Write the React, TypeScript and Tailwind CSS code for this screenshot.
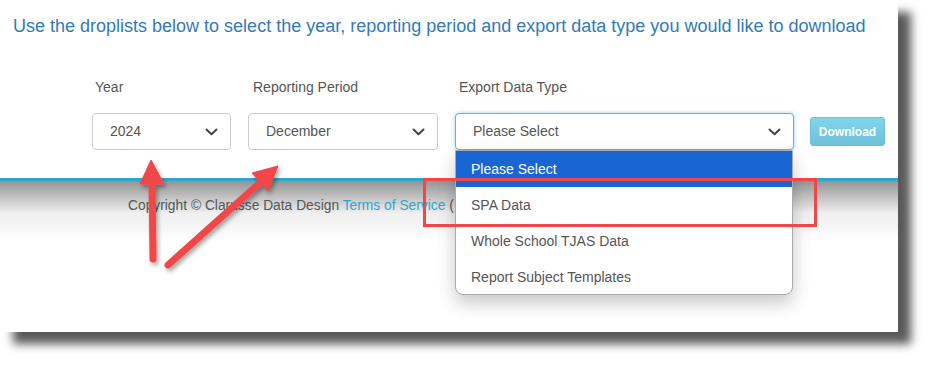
import React from "react";

const Chevron = () => (
  <svg width="13" height="8" viewBox="0 0 13 8" className="shrink-0">
    <path d="M1.5 1.5 L6.5 6.2 L11.5 1.5" fill="none" stroke="#444" strokeWidth="2" strokeLinecap="round" strokeLinejoin="round" />
  </svg>
);

const FakeSelect = ({ value, width, focused }: { value: string; width: string; focused?: boolean }) => (
  <div
    className={`${width} h-[37px] flex items-center justify-between pl-[17px] pr-[12px] rounded-[4px] bg-white text-[14px] text-[#555] ${
      focused ? "border border-[#66afe9] shadow-[0_0_4px_rgba(102,175,233,0.6)]" : "border border-[#ccc]"
    }`}
  >
    <span>{value}</span>
    <Chevron />
  </div>
);

const options = ["Please Select", "SPA Data", "Whole School TJAS Data", "Report Subject Templates"];

export default function App() {
  return (
    <div className="w-[940px] h-[375px] bg-white overflow-hidden" style={{ fontFamily: '"Liberation Sans", Arial, sans-serif' }}>
      <div className="relative w-[898px] h-[332px] bg-white shadow-[13px_12px_9px_rgba(0,0,0,0.65)]">
        {/* Top form */}
        <div className="h-[181px] border-b-[3px] border-[#2aa8cc] bg-white">
          <p className="pt-[14px] pl-[13px] text-[18px] text-[#337ab7] leading-[24px]">
            Use the droplists below to select the year, reporting period and export data type you would like to download
          </p>
          <div className="flex items-end gap-[17px] pl-[92px] mt-[41px]">
            <div className="flex flex-col gap-[18px]">
              <span className="pl-[3px] text-[14px] text-[#555] leading-[16px]">Year</span>
              <FakeSelect value="2024" width="w-[139px]" />
            </div>
            <div className="flex flex-col gap-[18px]">
              <span className="pl-[5px] text-[14px] text-[#555] leading-[16px]">Reporting Period</span>
              <FakeSelect value="December" width="w-[190px]" />
            </div>
            <div className="flex flex-col gap-[18px]">
              <span className="pl-[4px] text-[14px] text-[#555] leading-[16px]">Export Data Type</span>
              <FakeSelect value="Please Select" width="w-[339px]" focused />
            </div>
            <button className="mb-[4px] -ml-[1px] w-[75px] h-[29px] rounded-[3px] bg-gradient-to-b from-[#84d5ea] to-[#6cc0d9] border border-[#6cc0d9] text-white text-[12px] font-bold">
              Download
            </button>
          </div>
        </div>

        {/* Footer */}
        <div className="h-[151px] bg-gradient-to-b from-[rgba(0,0,0,0.42)] via-[rgba(0,0,0,0.05)] via-[22%] to-white to-[40%]">
          <p className="pt-[15px] pl-[128px] text-[13.8px] text-[#555] leading-[20px]">
            Copyright © Clarusse Data Design <span className="text-[#2aa6d0]">Terms of Service</span> (
          </p>
        </div>

        {/* Open dropdown list */}
        <div className="absolute left-[455px] top-[150px] w-[338px] h-[145px] bg-white rounded-b-[8px] border border-[#aaa] overflow-hidden shadow-[0_8px_18px_rgba(0,0,0,0.22)]">
          {options.map((o, i) => (
            <div
              key={o}
              className={`h-[36px] flex items-center pl-[15px] text-[14px] ${i === 0 ? "bg-[#1966d2] text-white" : "text-[#555]"}`}
            >
              {o}
            </div>
          ))}
        </div>

        {/* Highlight box */}
        <div className="absolute left-[423px] top-[178px] w-[394px] h-[49px] border-[3px] border-[#f2464a]" />

        {/* Arrows */}
        <svg className="absolute left-0 top-0 pointer-events-none" width="898" height="332" viewBox="0 0 898 332">
          <defs>
            <filter id="sh" x="-50%" y="-50%" width="200%" height="200%">
              <feDropShadow dx="2" dy="3" stdDeviation="2" floodColor="#000" floodOpacity="0.35" />
            </filter>
          </defs>
          <g fill="#f2464a" stroke="#f2464a" filter="url(#sh)">
            <line x1="153" y1="259" x2="152" y2="180" strokeWidth="7" strokeLinecap="round" />
            <polygon points="151,160 140,184 164,184" strokeWidth="1" strokeLinejoin="round" />
            <line x1="168" y1="265" x2="263" y2="180" strokeWidth="7" strokeLinecap="round" />
            <polygon points="278,166 252,173 268,191" strokeWidth="1" strokeLinejoin="round" />
          </g>
        </svg>
      </div>
    </div>
  );
}
